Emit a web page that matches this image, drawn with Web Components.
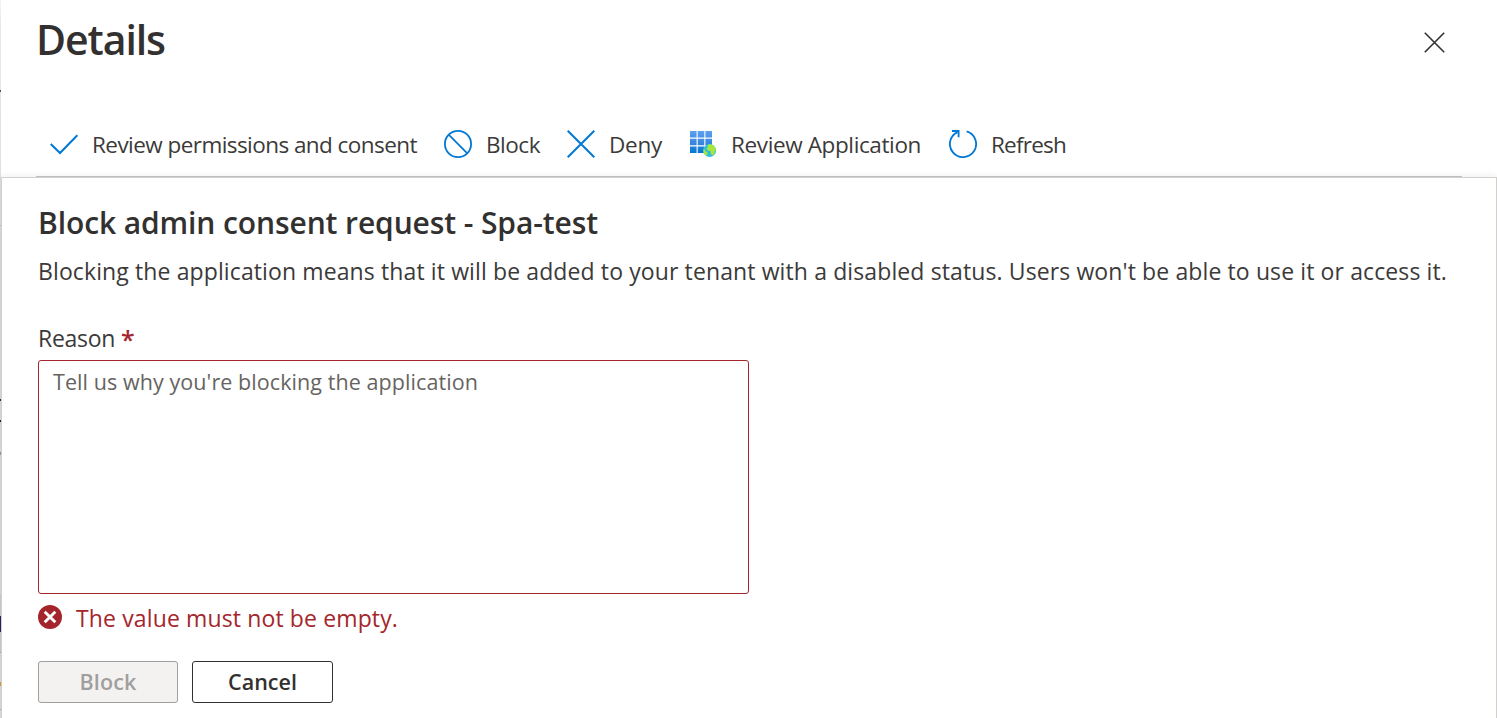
<!DOCTYPE html>
<html lang="en"><head><meta charset="utf-8"><title>Details</title>
<style>html,body{margin:0;height:718px;overflow:hidden;background:#fff;color:#323130;font-family:"Open Sans","Noto Sans",sans-serif}</style></head>
<body><details-blade></details-blade>
<script>
const shadow=(el,html)=>{el.attachShadow({mode:'open'}).innerHTML=html};

/* A single line of text whose tracking is adjusted to fill a given measure. */
customElements.define('fit-text',class extends HTMLElement{
  connectedCallback(){
    const w=+this.getAttribute('measure');
    shadow(this,`<style>:host{display:block;white-space:pre;width:${w}px}span{display:inline-block}</style><span><slot></slot></span>`);
    const s=this.shadowRoot.querySelector('span');
    const n=this.textContent.length;
    s.style.letterSpacing=((w-s.getBoundingClientRect().width)/n)+'px';
  }
});

const icons={
 check:'<path d="M.7 14 10 23 27.4 5.2" fill="none" stroke="#0078d4" stroke-width="2.1"/>',
 block:'<circle cx="14" cy="14" r="13.1" fill="none" stroke="#0078d4" stroke-width="1.8"/><path d="M4.7 4.7 23.3 23.3" stroke="#0078d4" stroke-width="1.8"/>',
 deny:'<path d="M.7.7 27.3 27.3M27.3.7.7 27.3" stroke="#0078d4" stroke-width="2"/>',
 refresh:'<path d="M17.6 1.4A13.1 13.1 0 1 1 8.5 2.1" fill="none" stroke="#0078d4" stroke-width="1.8"/><path d="M3 1H9.6V7.2" fill="none" stroke="#0078d4" stroke-width="1.8"/>',
 app:'<defs><linearGradient id="g" gradientUnits="userSpaceOnUse" x1="0" y1="1" x2="0" y2="23"><stop stop-color="#5ea0ef"/><stop offset=".6" stop-color="#3385dc"/><stop offset="1" stop-color="#0078d4"/></linearGradient><clipPath id="c"><circle cx="20.6" cy="20.5" r="6.5"/></clipPath></defs><path fill="url(#g)" d="M1 1h6.6v6.6H1zM8.7 1h6.6v6.6H8.7zM16.4 1H23v6.6h-6.6zM1 8.7h6.6v6.6H1zM8.7 8.7h6.6v6.6H8.7zM16.4 8.7H23v6.6h-6.6zM1 16.4h6.6V23H1zM8.7 16.4h6.6V23H8.7zM16.4 16.4H23V23h-6.6z"/><circle cx="20.6" cy="20.5" r="6.5" fill="#32bedd"/><g clip-path="url(#c)" fill="#a8e63a"><path d="M18.4 15.2 21 14 25 14.8 27.2 19 26 21.2 25 24.6 23 25.2 21.6 23.2 21.8 21.2 18.8 20.6 17.6 18.2 19 17z"/><path d="M14 19.6l2 .2.8 1.6 1.8 1.3-.3 2-1.5.8-2.4-2.4z"/></g>',
 close:'<path d="M.8.8 20.2 20.2M20.2.8.8 20.2" stroke="#323130" stroke-width="1.6"/>',
 error:'<circle cx="12" cy="12" r="12" fill="#a4262c"/><path d="M6.7 6.7 17.3 17.3M17.3 6.7 6.7 17.3" stroke="#fff" stroke-width="2.9"/>'
};
customElements.define('az-icon',class extends HTMLElement{
  connectedCallback(){const s=this.getAttribute('size')||28;
   shadow(this,`<style>:host{display:block;flex:none;width:${s}px;height:${s}px}svg{display:block}</style><svg width="${s}" height="${s}" viewBox="0 0 ${s} ${s}">${icons[this.getAttribute('name')]}</svg>`)}
});

customElements.define('command-item',class extends HTMLElement{
  connectedCallback(){shadow(this,`<style>:host{display:flex;align-items:center;font-size:22.5px;line-height:30px;color:#3b3a39}.label{margin-left:14px;padding-top:2px}</style><az-icon name="${this.getAttribute('icon')}"></az-icon><div class="label"><slot></slot></div>`)}
});

customElements.define('action-button',class extends HTMLElement{
  connectedCallback(){shadow(this,`<style>:host{display:block}button{box-sizing:border-box;display:flex;align-items:center;justify-content:center;width:141px;height:42px;padding:0 0 1px;border:1px solid #323130;border-radius:3px;background:#fff;color:#323130;font:600 21.5px/30px "Open Sans","Noto Sans",sans-serif}button:disabled{width:140px;background:#f3f2f1;border-color:#a19f9d;color:#a19f9d}</style><button ${this.hasAttribute('disabled')?'disabled':''}><slot></slot></button>`)}
});

customElements.define('reason-field',class extends HTMLElement{
  connectedCallback(){shadow(this,`<style>:host{display:block}
   .label{display:flex;height:36px;font-size:23px;line-height:36px;gap:6px;color:#3b3a39}.req{color:#a4262c;font-weight:600;font-size:25px;line-height:39px}
   .box{box-sizing:border-box;width:711px;height:234px;margin-top:4px;padding:6px 14px;border:1px solid #a4262c;border-radius:3px;color:#666461;font-size:21.5px;line-height:30px}
   .error{display:flex;align-items:center;margin-top:8px;height:32px;gap:14px;color:#a4262c;font-size:23px;line-height:32px}az-icon{margin-top:-2px}</style>
   <div class="label"><fit-text measure="77">Reason</fit-text><span class="req">*</span></div>
   <div class="box" role="textbox"><fit-text measure="425">Tell us why you're blocking the application</fit-text></div>
   <div class="error"><az-icon name="error" size="24"></az-icon><fit-text measure="322">The value must not be empty.</fit-text></div>`)}
});

customElements.define('block-panel',class extends HTMLElement{
  connectedCallback(){shadow(this,`<style>:host{box-sizing:border-box;display:block;width:1496px;height:542px;margin-left:1px;padding:23px 0 0 36px;background:#fff;border:1px solid #d2d0ce;box-shadow:0 0 8px rgba(0,0,0,.09);position:relative}
   h2{margin:0;font-size:30px;line-height:44px;font-weight:600}.desc{height:36px;margin-top:8px;font-size:23px;line-height:36px;color:#3b3a39}reason-field{margin-top:31px}.actions{display:flex;gap:14px;margin-top:27px}</style>
   <h2><fit-text measure="560">Block admin consent request - Spa-test</fit-text></h2>
   <div class="desc"><fit-text measure="1409">Blocking the application means that it will be added to your tenant with a disabled status. Users won't be able to use it or access it.</fit-text></div>
   <reason-field></reason-field>
   <div class="actions"><action-button disabled><fit-text measure="57">Block</fit-text></action-button><action-button><fit-text measure="69">Cancel</fit-text></action-button></div>`)}
});

customElements.define('details-blade',class extends HTMLElement{
  connectedCallback(){shadow(this,`<style>:host{display:block;width:1497px;height:718px;overflow:hidden;
   background:linear-gradient(#f5f5f5 0,#e8e8e8 20px,#e6e6e6 90px,#555 90px,#555 92px,#e3e3e3 92px,#dedede 225px,#bbb 225px,#bbb 226px,#dcdcdc 226px,#dcdcdc 399px,#273547 399px,#273547 401px,#dcdcdc 401px,#dcdcdc 420px,#252342 420px,#252342 422px,#eac18a 422px,#eac18a 423px,#dcdcdc 423px,#dcdcdc 452px,#b98045 452px,#b98045 453px,#70a9c4 453px,#70a9c4 455px,#dcdcdc 455px,#dcdcdc 594px,#cecece 594px,#cecece 616px,#292270 616px,#292270 632px,#cecece 632px,#cecece 652px,#aaa 652px,#aaa 653px,#ddd 653px,#ddd 682px,#d9993c 682px,#d9993c 686px,#ddd 686px,#ddd 709px,#aaa 709px,#aaa 710px,#ddd 710px) 0 0/1px 718px no-repeat #fff}
   header{display:flex;justify-content:space-between;padding:11px 52px 0 36px;height:105px}
   h1{margin:0;font-size:41px;line-height:56px;font-weight:600}az-icon{margin-top:21px}
   nav{box-sizing:border-box;display:flex;height:61px;margin:0 35px 0 36px;padding-left:14px;border-bottom:1px solid #c8c6c4}
   command-item{height:56px;margin-right:27px}command-item[icon=app]{margin-right:28px}</style>
   <header><h1><fit-text measure="129">Details</fit-text></h1><az-icon name="close" size="21"></az-icon></header>
   <nav><command-item icon="check"><fit-text measure="325">Review permissions and consent</fit-text></command-item><command-item icon="block"><fit-text measure="54">Block</fit-text></command-item><command-item icon="deny"><fit-text measure="53">Deny</fit-text></command-item><command-item icon="app"><fit-text measure="190">Review Application</fit-text></command-item><command-item icon="refresh"><fit-text measure="75">Refresh</fit-text></command-item></nav>
   <block-panel></block-panel>`)}
});
</script></body></html>
